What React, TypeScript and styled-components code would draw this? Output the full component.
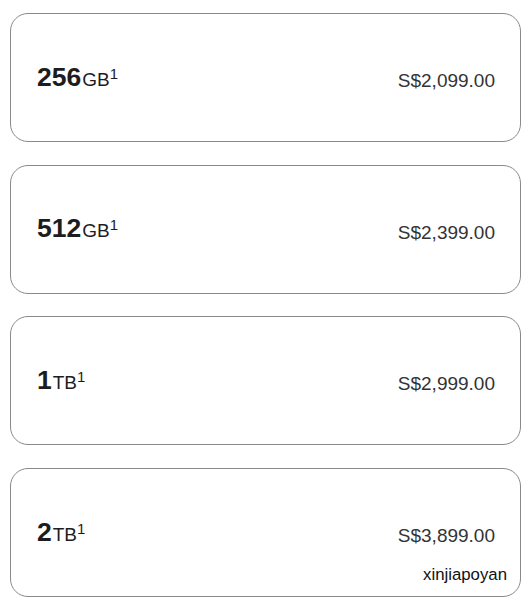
import React from 'react';
import styled, { createGlobalStyle } from 'styled-components';

const GlobalStyle = createGlobalStyle`
  body {
    margin: 0;
    background: #ffffff;
    font-family: "Liberation Sans", Arial, sans-serif;
  }
`;

const Page = styled.div`
  position: relative;
  width: 526px;
  height: 602px;
  padding: 13px 5px 0 10px;
  box-sizing: border-box;
  display: flex;
  flex-direction: column;
  gap: 22.7px;
`;

const Card = styled.div`
  height: 129px;
  box-sizing: border-box;
  border: 1px solid #8a8a8a;
  border-radius: 18px;
  display: flex;
  align-items: center;
  justify-content: space-between;
  padding: 0 25px 0 26px;
`;

const Capacity = styled.div`
  color: #1d1d1f;
  line-height: 1;
  margin-top: -1px;
  white-space: nowrap;
`;

const Amount = styled.span`
  font-size: 26.5px;
  font-weight: 700;
`;

const Unit = styled.span`
  font-size: 19px;
  margin-left: 1px;
`;

const Note = styled.span`
  font-size: 15px;
  position: relative;
  top: -7px;
  margin-left: 0;
`;

const Price = styled.div`
  font-size: 19px;
  color: #333336;
  margin-top: 6px;
  line-height: 1;
`;

const Watermark = styled.div`
  position: absolute;
  right: 19px;
  top: 565px;
  font-size: 16.8px;
  color: #111;
`;

const options = [
  { amount: '256', unit: 'GB', price: 'S$2,099.00' },
  { amount: '512', unit: 'GB', price: 'S$2,399.00' },
  { amount: '1', unit: 'TB', price: 'S$2,999.00' },
  { amount: '2', unit: 'TB', price: 'S$3,899.00' },
];

export default function App() {
  return (
    <>
      <GlobalStyle />
      <Page>
        {options.map(o => (
          <Card key={o.amount + o.unit}>
            <Capacity>
              <Amount>{o.amount}</Amount>
              <Unit>{o.unit}</Unit>
              <Note>1</Note>
            </Capacity>
            <Price>{o.price}</Price>
          </Card>
        ))}
        <Watermark>xinjiapoyan</Watermark>
      </Page>
    </>
  );
}
